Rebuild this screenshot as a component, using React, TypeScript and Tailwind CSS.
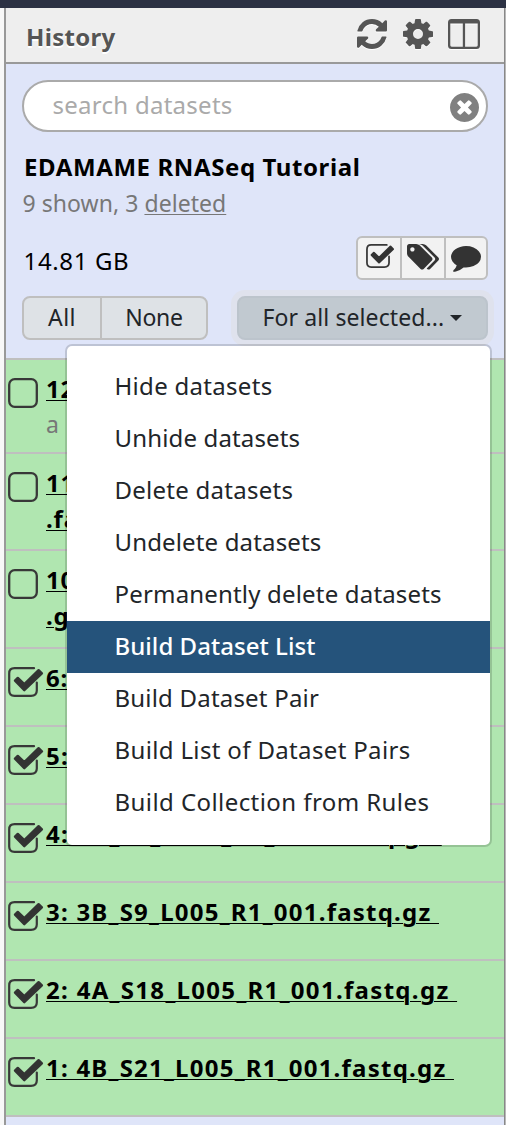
import type { ReactNode } from 'react';

const REFRESH =
  'M1639 1056q0 5-1 7-64 268-268 434.5t-478 166.5q-146 0-282.5-55t-243.5-157l-129 129q-19 19-45 19t-45-19-19-45v-448q0-26 19-45t45-19h448q26 0 45 19t19 45-19 45l-137 137q71 66 161 102t187 36q134 0 250-65t186-179q11-17 53-117 8-23 30-23h192q13 0 22.5 9.5t9.5 22.5zm25-800v448q0 26-19 45t-45 19h-448q-26 0-45-19t-19-45 19-45l138-138q-148-137-349-137-134 0-250 65t-186 179q-11 17-53 117-8 23-30 23h-199q-13 0-22.5-9.5t-9.5-22.5v-7q65-268 270-434.5t480-166.5q146 0 284 55.5t245 156.5l130-129q19-19 45-19t45 19 19 45z';
const COG =
  'M1152 896q0-106-75-181t-181-75-181 75-75 181 75 181 181 75 181-75 75-181zm512-109v222q0 12-8 23t-20 13l-185 28q-19 54-39 91 35 50 107 138 10 12 10 25t-9 23q-27 37-99 108t-94 71q-12 0-26-9l-138-108q-44 23-91 38-16 136-29 186-7 28-36 28h-222q-14 0-24.5-8.5t-11.5-21.5l-28-184q-49-16-90-37l-141 107q-10 9-25 9-14 0-25-11-126-114-165-168-7-10-7-23 0-12 8-23 15-21 51-66.5t54-70.5q-27-50-41-99l-183-27q-13-2-21-12.5t-8-23.5v-222q0-12 8-23t19-13l186-28q14-46 39-92-40-57-107-138-10-12-10-24 0-10 9-23 26-36 98.5-107.5t94.5-71.5q13 0 26 10l138 107q44-23 91-38 16-136 29-186 7-28 36-28h222q14 0 24.5 8.5t11.5 21.5l28 184q49 16 90 37l142-107q9-9 24-9 13 0 25 10 129 119 165 170 7 8 7 22 0 12-8 23-15 21-51 66.5t-54 70.5q26 50 41 98l183 28q13 2 21 12.5t8 23.5z';
const TIMES_CIRCLE =
  'M1277 1122q0-26-19-45l-181-181 181-181q19-19 19-45 0-27-19-46l-90-90q-19-19-46-19-26 0-45 19l-181 181-181-181q-19-19-45-19-27 0-46 19l-90 90q-19 19-19 46 0 26 19 45l181 181-181 181q-19 19-19 45 0 27 19 46l90 90q19 19 46 19 26 0 45-19l181-181 181 181q19 19 45 19 27 0 46-19l90-90q19-19 19-46zm387-226q0 209-103 385.5t-279.5 279.5-385.5 103-385.5-103-279.5-279.5-103-385.5 103-385.5 279.5-279.5 385.5-103 385.5 103 279.5 279.5 103 385.5z';
const TAGS =
  'M448 448q0-53-37.5-90.5t-90.5-37.5-90.5 37.5-37.5 90.5 37.5 90.5 90.5 37.5 90.5-37.5 37.5-90.5zm1067 576q0 53-37 90l-491 492q-39 37-91 37-53 0-90-37l-715-716q-38-37-64.5-101t-26.5-117v-416q0-52 38-90t90-38h416q53 0 117 26.5t102 64.5l715 714q37 39 37 91zm384 0q0 53-37 90l-491 492q-39 37-91 37-36 0-59-14t-53-45l470-470q37-37 37-90 0-52-37-91l-715-714q-38-38-102-64.5t-117-26.5h224q53 0 117 26.5t102 64.5l715 714q37 39 37 91z';
const COMMENT =
  'M1792 896q0 174-120 321.5t-326 233-450 85.5q-70 0-145-8-198 175-460 242-49 14-114 22-17 2-30.5-9t-17.5-29v-1q-3-4-.5-12t2-10 4.5-9.5l6-9 7-8.5 8-9q7-8 31-34.5t34.5-38 31-39.5 32.5-51 27-59 26-76q-157-89-247.5-220t-90.5-281q0-130 71-248.5t191-204.5 286-136.5 348-50.5q244 0 450 85.5t326 233 120 321.5z';

const headIcon = 'h-[30px] w-[30px] fill-[#555] drop-shadow-[0_1px_0_#fff]';

function CheckBox({ checked, className }: { checked: boolean; className: string }) {
  return (
    <svg viewBox="0 0 36 30" className={className} fill="none">
      {checked ? (
        <>
          <path
            d="M26 1.2H6.5Q1.2 1.2 1.2 6.5V23.5Q1.2 28.8 6.5 28.8H23Q28.8 28.8 28.8 23.5V15.5"
            stroke="#383838"
            strokeWidth="2.2"
            strokeLinecap="round"
          />
          <path
            d="M7 13.7L9.8 10.9L16.3 17.1L30.6 3.2L33.9 6.400L16.3 23.2Z"
            fill="#333"
            stroke="#333"
            strokeWidth="2.4"
            strokeLinejoin="round"
          />
        </>
      ) : (
        <rect x="1.2" y="1.2" width="27.6" height="27.6" rx="5.5" stroke="#383838" strokeWidth="2.3" />
      )}
    </svg>
  );
}

type Item = { lines: string[]; sub?: string; checked: boolean; size: string; spacing: string };

const items: Item[] = [
  { lines: ['12:'], sub: 'a', checked: false, size: 'h-[94px] pt-[11px]', spacing: 'tracking-[0.8px]' },
  { lines: ['11:', '.fa'], checked: false, size: 'h-[97px] pt-[11px]', spacing: 'tracking-[0.8px]' },
  { lines: ['10:', '.gz'], checked: false, size: 'h-[98px] pt-[11px]', spacing: 'tracking-[0.8px]' },
  { lines: ['6:\u00a0'], checked: true, size: 'h-[78px] pt-[11px]', spacing: 'tracking-[0.8px]' },
  { lines: ['5:\u00a0'], checked: true, size: 'h-[78px] pt-[11px]', spacing: 'tracking-[1.2px]' },
  { lines: ['4: 3A_S8_L005_R1_001.fastq.gz\u00a0'], checked: true, size: 'h-[78px] pt-[11px]', spacing: 'tracking-[1.3px]' },
  { lines: ['3: 3B_S9_L005_R1_001.fastq.gz\u00a0'], checked: true, size: 'h-[78px] pt-[11px]', spacing: 'tracking-[1.23px]' },
  { lines: ['2: 4A_S18_L005_R1_001.fastq.gz\u00a0'], checked: true, size: 'h-[78px] pt-[11px]', spacing: 'tracking-[1.31px]' },
  { lines: ['1: 4B_S21_L005_R1_001.fastq.gz\u00a0'], checked: true, size: 'h-[78px] pt-[11px]', spacing: 'tracking-[1.23px]' },
];

function Row({ item }: { item: Item }) {
  return (
    <li className={`flex items-start border-b-2 border-[#bfbfbf] bg-[#b0e6b0] pl-[2px] ${item.size}`}>
      <CheckBox checked={item.checked} className="mt-[7px] h-[30px] w-[36px] shrink-0" />
      <div className="ml-[2px] flex flex-col items-start whitespace-nowrap leading-[36px]">
        {item.lines.map((line) => (
          <a
            key={line}
            className={`font-bold text-black underline decoration-[1.4px] underline-offset-[2px] ${item.spacing}`}
          >
            {line}
          </a>
        ))}
        {item.sub && <span className="-mt-[1px] text-[23px] text-[#777]">{item.sub}</span>}
      </div>
    </li>
  );
}

const menu = [
  { label: 'Hide datasets', spacing: 'tracking-[0.3px]' },
  { label: 'Unhide datasets', spacing: 'tracking-[0.15px]' },
  { label: 'Delete datasets', spacing: 'tracking-[0.26px]' },
  { label: 'Undelete datasets', spacing: 'tracking-[0.15px]' },
  { label: 'Permanently delete datasets', spacing: 'tracking-[0.18px]' },
  { label: 'Build Dataset List', spacing: 'tracking-[0.05px]', active: true },
  { label: 'Build Dataset Pair', spacing: 'tracking-[0.2px]' },
  { label: 'Build List of Dataset Pairs', spacing: 'tracking-[0.35px]' },
  { label: 'Build Collection from Rules', spacing: 'tracking-[0.43px]' },
];

function ActionsMenu() {
  return (
    <ul className="absolute top-[344px] left-[65px] w-[427px] rounded-[7px] border-2 border-black/15 bg-white bg-clip-padding pt-[15px] pb-[16px]">
      {menu.map((m) => (
        <li
          key={m.label}
          className={`flex h-[52px] items-center pb-[2px] pl-[47.5px] whitespace-nowrap ${m.spacing} ${
            m.active ? 'bg-[#25537b] font-medium text-white' : 'text-[#212529]'
          }`}
        >
          {m.label}
        </li>
      ))}
    </ul>
  );
}

function Tool({ children, className }: { children: ReactNode; className: string }) {
  return <button className={`flex items-center justify-center ${className}`}>{children}</button>;
}

export default function App() {
  return (
    <div className="relative flex h-[1125px] w-[506px] flex-col overflow-hidden bg-[#f8f8f8] font-['Noto_Sans','Open_Sans',sans-serif] text-[24px]">
      <div className="h-[8px] shrink-0 bg-[#2c3143]" />
      <div className="flex min-h-0 flex-1">
        <div className="ml-[4px] flex w-[500px] shrink-0 flex-col border-l-2 border-[#999] bg-[#dfe5f9]">
          <header className="flex h-[56px] shrink-0 items-center border-b-2 border-[#999] bg-[#eee] pr-[24px] pl-[20px]">
            <h1 className="flex-1 pt-[4px] font-bold tracking-[0.3px] text-[#555] [text-shadow:0_2px_0_#fff]">History</h1>
            <div className="flex items-start pb-[2px]">
              <svg viewBox="128 128 1536 1536" className={headIcon}>
                <path d={REFRESH} />
              </svg>
              <svg viewBox="128 128 1536 1536" className={`ml-[16px] ${headIcon}`}>
                <path d={COG} />
              </svg>
              <svg viewBox="0 0 32 30" className="ml-[15px] h-[30px] w-[32px] fill-[#555] drop-shadow-[0_1px_0_#fff]">
                <path
                  fillRule="evenodd"
                  d="M3.5 0H28.5Q32 0 32 3.5V26.5Q32 30 28.5 30H3.5Q0 30 0 26.5V3.5Q0 0 3.5 0ZM2.3 4.5V26.3Q2.3 27.7 3.7 27.7H14.8V4.5ZM17.1 4.5V27.7H28.3Q29.7 27.7 29.7 26.3V4.5Z"
                />
              </svg>
            </div>
          </header>

          <section className="shrink-0 px-[16px] pt-[16px] pb-[18px]">
            <div className="flex h-[52px] items-center justify-between rounded-full border-2 border-[#aaa] bg-white pr-[7px] pl-[28.5px]">
              <span className="pb-[2px] tracking-[0.27px] text-[#aaa]">search datasets</span>
              <svg viewBox="128 128 1536 1536" className="mt-[3px] h-[29px] w-[29px] fill-[#808080]">
                <path d={TIMES_CIRCLE} />
              </svg>
            </div>
            <h2 className="mt-[17px] pl-[2px] leading-[36px] font-bold tracking-[0.6px] text-black">EDAMAME RNASeq Tutorial</h2>
            <p className="mt-[2px] h-[32px] pl-[0.5px] text-[23px] leading-[32px] tracking-[0.05px] text-[#777]">
              9 shown, 3 <a className="underline decoration-[1.4px] underline-offset-[2px]">deleted</a>
            </p>
            <div className="mt-[17px] flex h-[44px] items-center justify-between">
              <span className="pt-[5px] pl-[1.5px] tracking-[0.65px] text-black">14.81 GB</span>
              <div className="flex h-[44px] divide-x-2 divide-[#bfbfbf] rounded-[6px] border-2 border-[#bfbfbf] bg-[#f2f2f2]">
                <Tool className="w-[44px]">
                  <CheckBox checked className="mb-[4px] ml-[2px] h-[24px] w-[28.8px]" />
                </Tool>
                <Tool className="w-[44px]">
                  <svg viewBox="0 128 1899 1515" className="mb-[2px] h-[25.5px] w-[32px] fill-[#333]">
                    <path d={TAGS} />
                  </svg>
                </Tool>
                <Tool className="w-[40px]">
                  <svg viewBox="0 256 1792 1540" className="mt-[2px] h-[26px] w-[30px] fill-[#333]">
                    <path d={COMMENT} />
                  </svg>
                </Tool>
              </div>
            </div>
            <div className="mt-[16px] flex h-[44px] justify-between text-[23px] text-[#212529]">
              <div className="flex w-[186px] divide-x-2 divide-[#bfbfbf] rounded-[8px] border-2 border-[#bfbfbf] bg-[#dee2e6]">
                <button className="w-[78px] pb-[1px] tracking-[0.5px]">All</button>
                <button className="flex-1 pb-[1px] tracking-[-0.3px]">None</button>
              </div>
              <button className="flex w-[251px] items-center rounded-[8px] border-2 border-[#bcc4cc] bg-[#c1c9d0] pb-[1px] pl-[23.5px] whitespace-nowrap shadow-[0_0_0_6px_#dfe2ed]">
                <span className="tracking-[0.1px]">For all selected...</span>
                <svg viewBox="0 0 12 6" className="ml-[6px] h-[6px] w-[12px] fill-[#212529]">
                  <path d="M0 0H12L6 6Z" />
                </svg>
              </button>
            </div>
          </section>

          <ul className="shrink-0 border-t-2 border-[#bfbfbf]">
            {items.map((item) => (
              <Row key={item.lines[0]} item={item} />
            ))}
          </ul>
        </div>
        <div className="w-[2px] border-l border-[#888] bg-[#b8b8b8]" />
      </div>
      <ActionsMenu />
    </div>
  );
}
